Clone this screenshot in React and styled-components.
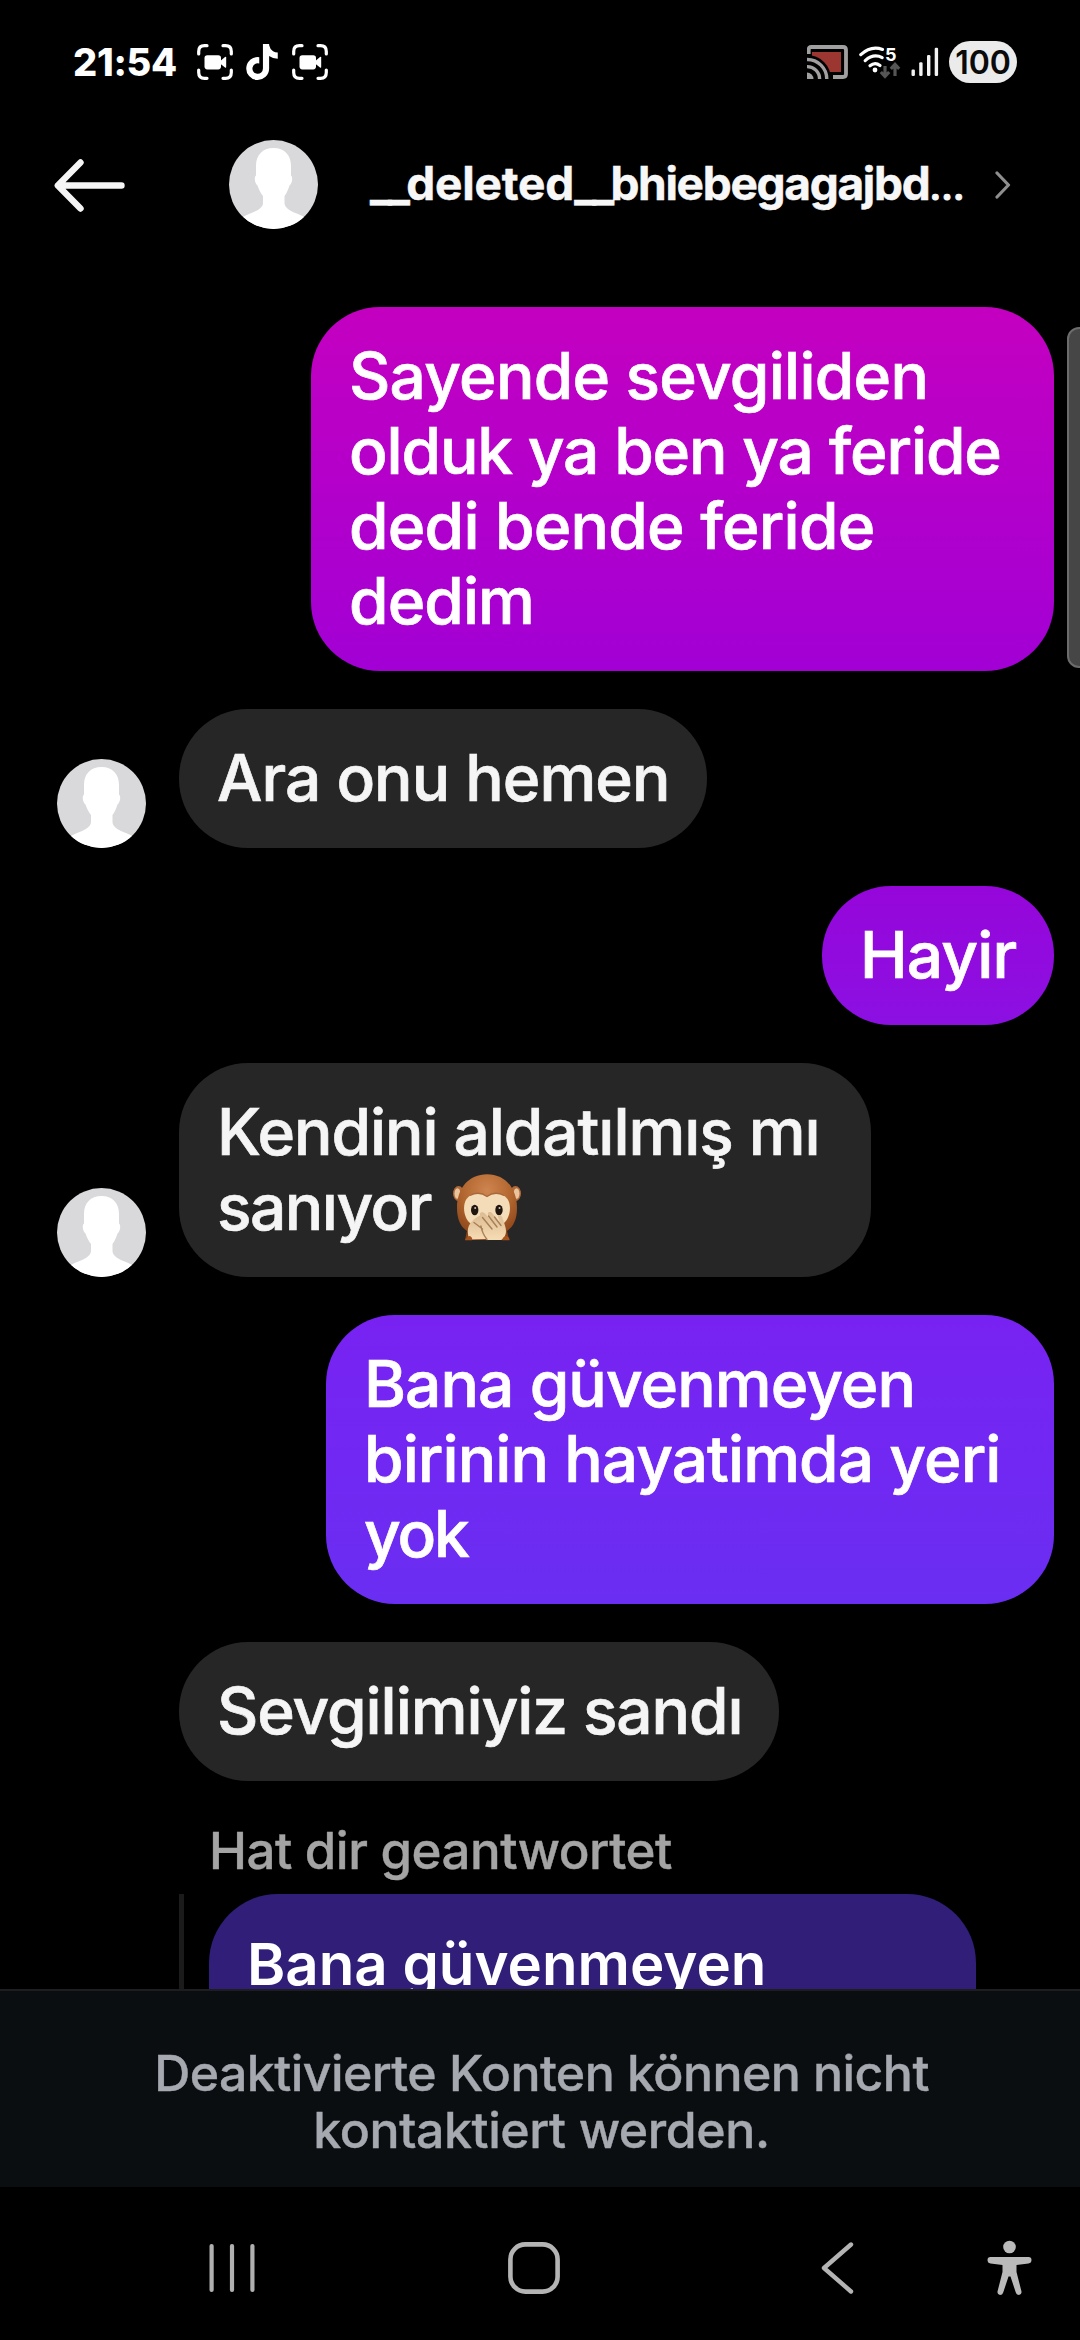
import React from "react";
import styled, { createGlobalStyle } from "styled-components";
import { FaTiktok } from "react-icons/fa6";

const GlobalStyle = createGlobalStyle`
  html, body { margin: 0; background: #000; }
  *, *::before, *::after { box-sizing: border-box; }
`;

const Screen = styled.div`
  position: relative;
  width: 1080px;
  height: 2340px;
  display: flex;
  flex-direction: column;
  overflow: hidden;
  background: #000;
  color: #fff;
  font-family: Inter, "Liberation Sans", sans-serif;
  svg { display: block; flex: none; }
`;

/* ---------- status bar ---------- */

const StatusBar = styled.div`
  height: 124px;
  padding: 0 63px 0 73px;
  display: flex;
  align-items: center;
  justify-content: space-between;
`;
const StatusGroup = styled.div`
  display: flex;
  align-items: center;
  gap: ${(p) => p.$gap}px;
`;
const Clock = styled.span`
  width: 112px;
  font-size: 38px;
  font-weight: 800;
  line-height: 40px;
  letter-spacing: -0.3px;
`;
const Battery = styled.span`
  width: 68px;
  height: 42px;
  border-radius: 21px;
  background: #ebebeb;
  color: #0a0a0a;
  font-size: 32px;
  font-weight: 600;
  line-height: 43px;
  text-align: center;
`;

const RecordIcon = () => (
  <svg width="36" height="36" viewBox="0 0 36 36" fill="none">
    <path
      d="M1.7 10V7.5Q1.7 1.7 7.5 1.7H10M26 1.7H28.5Q34.3 1.7 34.3 7.5V10M34.3 26V28.5Q34.3 34.3 28.5 34.3H26M10 34.3H7.5Q1.7 34.3 1.7 28.5V26"
      stroke="#fff" strokeWidth="3.2" strokeLinecap="round"
    />
    <rect x="7.5" y="11.2" width="16.5" height="14.2" rx="2.8" fill="#fff" />
    <path d="M23 17.2 28 13Q29.2 12.4 29.2 13.6V23Q29.2 24.2 28 23.6L23 19.6Z" fill="#fff" />
  </svg>
);

const CastIcon = () => (
  <svg width="42" height="34" viewBox="0 0 42 34" fill="none">
    <rect x="5" y="7" width="29" height="20" fill="#9c3631" />
    <path d="M0 10a24 24 0 0 1 24 24H0Z" fill="#000" />
    <path d="M1.7 9V4.5Q1.7 2 4.2 2H36Q39 2 39 5V29Q39 32 36 32H26" stroke="#a0a0a0" strokeWidth="3.8" />
    <path d="M0 14.5A19.5 19.5 0 0 1 19.8 34M0 21.6A12.4 12.4 0 0 1 12.6 34" stroke="#a0a0a0" strokeWidth="3.4" />
    <path d="M0 27.5A6.5 6.5 0 0 1 6.5 34H0Z" fill="#a0a0a0" />
  </svg>
);

const WifiWrap = styled.div`
  position: relative;
  width: 42px;
  height: 34px;
`;
const WifiBand = styled.span`
  position: absolute;
  left: 26px;
  top: 1px;
  font-size: 18px;
  line-height: 18px;
  font-weight: 700;
`;
const WifiIcon = () => (
  <WifiWrap>
    <svg width="42" height="34" viewBox="0 0 42 34" fill="none">
      <g stroke="#fff" strokeWidth="3.2" strokeLinecap="round">
        <path d="M1.8 9.6Q12 .2 23.5 4.4" />
        <path d="M6.2 15.6Q14.5 8.2 23.2 12.6" />
        <path d="M11 20.8Q16 16.6 21 20.6" />
      </g>
      <circle cx="16" cy="25" r="2.4" fill="#fff" />
      <g stroke="#555" strokeWidth="3.2">
        <path d="M26 21v10M21.8 27l4.2 4.4 4.2-4.4" />
        <path d="M36 31V20M31.8 23.8 36 19.4l4.2 4.4" />
      </g>
    </svg>
    <WifiBand>5</WifiBand>
  </WifiWrap>
);

const SignalIcon = () => (
  <svg width="28" height="30" viewBox="0 0 28 30" fill="#f2f2f2">
    <rect x="0.5" y="22.5" width="3.4" height="6.5" rx="1.2" />
    <rect x="8.2" y="15.3" width="3.4" height="13.7" rx="1.2" />
    <rect x="16" y="8" width="3.4" height="21" rx="1.2" />
    <rect x="23.7" y="0.8" width="3.4" height="28.2" rx="1.2" />
  </svg>
);

/* ---------- chat header ---------- */

const Header = styled.header`
  height: 121px;
  padding: 0 69px 0 54px;
  display: flex;
  align-items: center;
`;
const BackButton = styled.div`
  width: 175px;
  padding-top: 2px;
`;
const UserName = styled.div`
  flex: 1;
  padding-left: 52px;
  font-size: 46px;
  font-weight: 700;
  line-height: 60px;
  letter-spacing: -0.15px;
  white-space: nowrap;
  color: #f7f7f7;
  -webkit-text-stroke: 0.5px currentColor;
`;
const Underscores = styled.span`
  letter-spacing: -3.8px;
`;
const NameTail = styled.span`
  letter-spacing: -1.3px;
`;
const Ellipsis = styled.span`
  font-size: 35px;
  -webkit-text-stroke: 1px currentColor;
`;

const Avatar = () => (
  <svg width="89" height="89" viewBox="0 0 89 89">
    <defs>
      <clipPath id="avatarClip"><circle cx="44.5" cy="44.5" r="44.5" /></clipPath>
    </defs>
    <g clipPath="url(#avatarClip)">
      <rect width="89" height="89" fill="#d9d9dc" />
      <path
        fill="#fff"
        d="M44.5 8C33.500 8 27 15 27 26V35.500C25 37 25.500 43 28.500 45.500C30 50 32 53.500 34 56V63C34 68 27 71.500 20 74C16 75.500 13.500 77 12 79V89H77V79C75.500 77 73 75.500 69 74C62 71.500 55.500 68 55.500 63V56C57.500 53.500 59 50 60.500 45.500C63.500 43 64 37 62 35.500V26C62 15 55.500 8 44.500 8Z"
      />
    </g>
  </svg>
);

/* ---------- conversation ---------- */

const Chat = styled.main`
  height: 1744px;
  padding: 62px 26px 0 57px;
  overflow: hidden;
  display: flex;
  flex-direction: column;
  flex: none;
`;
const Row = styled.div`
  display: flex;
  flex: none;
  align-items: flex-end;
  justify-content: ${(p) => (p.$mine ? "flex-end" : "flex-start")};
  margin-bottom: 38px;
`;
const AvatarSlot = styled.div`
  width: 122px;
`;
const Bubble = styled.div`
  width: ${(p) => p.$width}px;
  padding: 31px 0 33px 38px;
  border-radius: 69px;
  background: ${(p) => (p.$from ? `linear-gradient(${p.$from}, ${p.$to})` : "#262626")};
  color: ${(p) => (p.$from ? "#fff" : "#f5f5f5")};
  font-size: 64px;
  font-weight: 500;
  line-height: 75px;
  -webkit-text-stroke: 0.7px currentColor;
`;
const Line = styled.div`
  display: flex;
  white-space: pre;
  letter-spacing: ${(p) => p.$track}px;
`;
const ReplyLabel = styled.div`
  flex: none;
  margin: 2px 0 13px;
  padding-left: 152px;
  font-size: 51px;
  font-weight: 500;
  line-height: 60px;
  letter-spacing: -0.51px;
  color: #a4a4a4;
  -webkit-text-stroke: 0.4px currentColor;
`;
const Quote = styled.div`
  flex: none;
  margin-left: 122px;
  padding-left: 25px;
  border-left: 5px solid #1b1b1b;
`;
const QuoteBubble = styled.div`
  width: 767px;
  height: 139px;
  padding: 33px 0 0 38px;
  border-radius: 69px 69px 0 0;
  background: #301e78;
  font-size: 58.2px;
  font-weight: 600;
  line-height: 75px;
`;
const ScrollThumb = styled.div`
  position: absolute;
  top: 327px;
  right: -14px;
  width: 27px;
  height: 341px;
  border: 2px solid #6c6c6c;
  border-radius: 12px;
  background: #464646;
`;

const EmojiSlot = styled.span`
  display: block;
  margin: 3px 0 0 19px;
  height: 72px;
`;
const MonkeyEmoji = () => (
  <svg width="74" height="72" viewBox="0 0 74 72" role="img" aria-label="🙊">
    <defs>
      <radialGradient id="fur" cx="50%" cy="25%" r="75%">
        <stop offset="0" stopColor="#cf8550" />
        <stop offset="0.55" stopColor="#b2662f" />
        <stop offset="1" stopColor="#8a4318" />
      </radialGradient>
      <linearGradient id="paw" x1="0" y1="0" x2="0" y2="1">
        <stop offset="0" stopColor="#dcbb92" />
        <stop offset="1" stopColor="#f6dcb4" />
      </linearGradient>
    </defs>
    <ellipse cx="8.500" cy="21.500" rx="5.500" ry="7.500" fill="#b2693a" />
    <ellipse cx="7.500" cy="21.500" rx="3" ry="5.200" fill="#eac49d" />
    <ellipse cx="65.500" cy="21.500" rx="5.500" ry="7.500" fill="#b2693a" />
    <ellipse cx="66.500" cy="21.500" rx="3" ry="5.200" fill="#eac49d" />
    <path d="M37 2.300C19 2.300 7 16 7 36C7 48 11 55 17 59L15 68H59L57 59C63 55 67 48 67 36C67 16 55 2.300 37 2.300Z" fill="url(#fur)" />
    <path d="M37 24.500C31 19.500 21.500 20.500 16.500 27C12 34 14 46 20 51C25 55 49 55 54 51C60 46 62 34 57.500 27C52.500 20.500 43 19.500 37 24.500Z" fill="#f3dcb7" />
    <path d="M20 23.500Q29 18.500 37 24.500Q45 18.500 54 23.500" fill="none" stroke="#a8683a" strokeWidth="1.300" />
    <ellipse cx="24.700" cy="38" rx="3.700" ry="5.300" fill="#20150f" />
    <circle cx="25.200" cy="36" r="1" fill="#d8c5b2" />
    <ellipse cx="49" cy="38" rx="3.700" ry="5.300" fill="#20150f" />
    <circle cx="49.500" cy="36" r="1" fill="#d8c5b2" />
    <path d="M19 67.500C18 62 17 58 19 53.500C21 49 25 46 31 43L38 46L43 54L37 67Z" fill="url(#paw)" />
    <path d="M30 43C29 40 33 39 35.500 42L42 50L38 43C37 40 40 39 42.500 41.500L50 51L48 45C48 42 51.500 42.500 52.500 46C54 51 56 55 56 59C56 63 54 67 51 68H37C33 65 31 60 31 56Z" fill="url(#paw)" />
    <path d="M32.500 45.500L42 57M38.500 44L47 55M44.500 45L51 53.500M24 50.500L32.500 57M37 67.500Q32 61 31 54" fill="none" stroke="#a97f58" strokeWidth="1.400" strokeLinecap="round" />
    <path d="M15 68.300Q17 64 20 64Q23 66 22 68.300ZM52 68.300Q53 64 57 64Q60 66 59.500 68.300Z" fill="#a4521f" />
  </svg>
);

/* ---------- bottom ---------- */

const Notice = styled.footer`
  height: 198px;
  flex: none;
  padding: 54px 0 0 3px;
  border-top: 2px solid #1c1e20;
  background: #0b0e11;
  color: #a6a9b0;
  font-size: 50px;
  font-weight: 500;
  line-height: 57px;
  text-align: center;
  -webkit-text-stroke: 0.4px currentColor;
`;
const NoticeLine = styled.div`
  letter-spacing: ${(p) => p.$track}px;
`;
const NavBar = styled.nav`
  height: 153px;
  flex: none;
  padding: 9px 48px 0 209px;
  display: flex;
  align-items: center;
`;
const NavItem = styled.div`
  width: ${(p) => p.$width}px;
`;

const messages = [
  { width: 743, from: "#c400c0", to: "#a200d5", lines: [["Sayende sevgiliden", -0.75], ["olduk ya ben ya feride", -1.15], ["dedi bende feride", -0.78], ["dedim", -0.93]] },
  { width: 528, avatar: true, lines: [["Ara onu hemen", -0.96]] },
  { width: 232, from: "#9606da", to: "#8c10e2", lines: [["Hayir", -0.85]] },
  { width: 692, avatar: true, lines: [["Kendini aldatılmış mı", -1.06], ["sanıyor", -1.5, true]] },
  { width: 728, from: "#7822f2", to: "#6a2ef2", lines: [["Bana güvenmeyen", -0.93], ["birinin hayatimda yeri", -0.92], ["yok", -2.1]] },
  { width: 600, lines: [["Sevgilimiyiz sandı", -1.09]] },
];

const Message = ({ width, from, to, avatar, lines }) => (
  <Row $mine={!!from}>
    {!from && <AvatarSlot>{avatar && <Avatar />}</AvatarSlot>}
    <Bubble $width={width} $from={from} $to={to}>
      {lines.map(([text, track, emoji]) => (
        <Line key={text} $track={track}>
          {text}
          {emoji && <EmojiSlot><MonkeyEmoji /></EmojiSlot>}
        </Line>
      ))}
    </Bubble>
  </Row>
);

export default function App() {
  return (
    <Screen>
      <GlobalStyle />
      <StatusBar>
        <StatusGroup $gap={11.5}>
          <Clock>21:54</Clock>
          <RecordIcon />
          <FaTiktok size={36} color="#fff" />
          <RecordIcon />
        </StatusGroup>
        <StatusGroup $gap={10}>
          <CastIcon />
          <WifiIcon />
          <SignalIcon />
          <Battery>100</Battery>
        </StatusGroup>
      </StatusBar>

      <Header>
        <BackButton>
          <svg width="71" height="53" viewBox="0 0 71 53" fill="none" stroke="#f5f5f5" strokeWidth="6.4" strokeLinecap="round" strokeLinejoin="round">
            <path d="M26.500 3.500 3.800 26.500 26.500 49.500M4 26.500H67.500" />
          </svg>
        </BackButton>
        <Avatar />
        <UserName>
          <Underscores>__</Underscores>deleted<Underscores>__</Underscores>
          <NameTail>bhiebegagajbd<Ellipsis>…</Ellipsis></NameTail>
        </UserName>
        <svg width="16" height="28" viewBox="0 0 16 28" fill="none" stroke="#8e8e8e" strokeWidth="3.2" strokeLinecap="round" strokeLinejoin="round">
          <path d="M2 2 13.500 14 2 26" />
        </svg>
      </Header>

      <Chat>
        {messages.map((m) => <Message key={m.lines[0][0]} {...m} />)}
        <ReplyLabel>Hat dir geantwortet</ReplyLabel>
        <Quote>
          <QuoteBubble>Bana güvenmeyen</QuoteBubble>
        </Quote>
      </Chat>
      <ScrollThumb />

      <Notice>
        <NoticeLine $track={-0.56}>Deaktivierte Konten können nicht</NoticeLine>
        <NoticeLine $track={-0.41}>kontaktiert werden.</NoticeLine>
      </Notice>

      <NavBar>
        <NavItem $width={299}>
          <svg width="46" height="48" viewBox="0 0 46 48" fill="#b0b0b0">
            <rect x="0.5" width="4.2" height="48" rx="2" />
            <rect x="20.900" width="4.2" height="48" rx="2" />
            <rect x="41.300" width="4.2" height="48" rx="2" />
          </svg>
        </NavItem>
        <NavItem $width={313}>
          <svg width="52" height="52" viewBox="0 0 52 52" fill="none">
            <rect x="2.400" y="2.400" width="47.200" height="47.200" rx="15" stroke="#b4b4b4" strokeWidth="4.6" />
          </svg>
        </NavItem>
        <NavItem $width={166}>
          <svg width="33" height="52" viewBox="0 0 33 52" fill="none" stroke="#b4b4b4" strokeWidth="4.4" strokeLinecap="round" strokeLinejoin="round">
            <path d="M30 2.500 3 26 30 49.500" />
          </svg>
        </NavItem>
        <svg width="45" height="56" viewBox="0 0 45 56" fill="#bababa">
          <circle cx="22.500" cy="7" r="6.300" />
          <path d="M3.500 17H41.500Q44.500 17 44.500 20Q44.500 23 41.500 23.500L29.500 25V32L34.500 51.500Q35 54.500 32 55Q29.500 55 28.800 52.500L23.500 36.500H21.500L16.200 52.500Q15.500 55 13 55Q10 54.500 10.500 51.500L15.500 32V25L3.500 23.500Q.5 23 .5 20Q.5 17 3.500 17Z" />
        </svg>
      </NavBar>
    </Screen>
  );
}
